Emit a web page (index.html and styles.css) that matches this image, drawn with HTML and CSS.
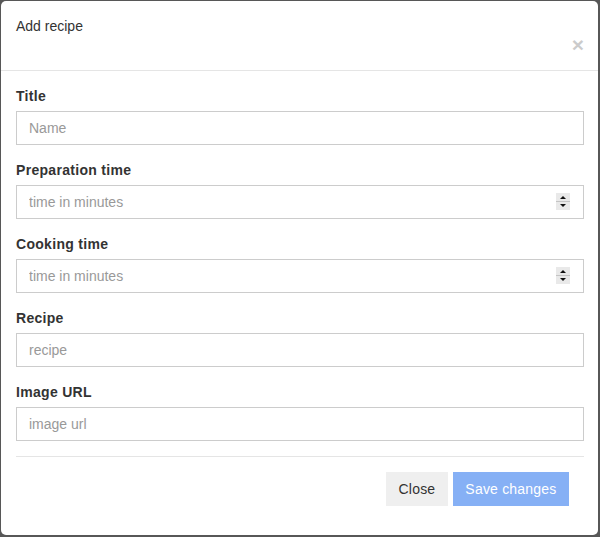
FILE: index.html
```html
<!DOCTYPE html>
<html>
<head>
<meta charset="utf-8">
<link rel="stylesheet" href="styles.css">
</head>
<body>
<div class="modal">
  <div class="modal-header">
    <h4 class="modal-title">Add recipe</h4>
    <span class="close">&times;</span>
  </div>
  <div class="modal-body">
    <div class="form-group">
      <label class="label">Title</label>
      <div class="field"><input class="input" type="text" placeholder="Name"></div>
    </div>
    <div class="form-group">
      <label class="label">Preparation time</label>
      <div class="field">
        <input class="input" type="text" placeholder="time in minutes">
        <span class="spinner"><span class="spin-up"></span><span class="spin-down"></span></span>
      </div>
    </div>
    <div class="form-group">
      <label class="label">Cooking time</label>
      <div class="field">
        <input class="input" type="text" placeholder="time in minutes">
        <span class="spinner"><span class="spin-up"></span><span class="spin-down"></span></span>
      </div>
    </div>
    <div class="form-group">
      <label class="label">Recipe</label>
      <div class="field"><input class="input" type="text" placeholder="recipe"></div>
    </div>
    <div class="form-group">
      <label class="label">Image URL</label>
      <div class="field"><input class="input" type="text" placeholder="image url"></div>
    </div>
    <hr class="divider">
  </div>
  <div class="modal-footer">
    <button class="btn btn-default">Close</button>
    <button class="btn btn-primary">Save changes</button>
  </div>
</div>
</body>
</html>
```
FILE: styles.css
```css
* { box-sizing: border-box; }
html, body { margin: 0; padding: 0; }
body {
  width: 600px;
  height: 537px;
  background: #575757;
  padding: 1px 2px 2px 1px;
  font-family: "Liberation Sans", Arial, sans-serif;
  font-size: 14px;
  line-height: 20px;
  color: #333;
}
.modal {
  background: #fff;
  height: 534px;
  border-radius: 5px;
}
.modal-header {
  padding: 15px 14px 15px 15px;
  border-bottom: 1px solid #e5e5e5;
}
.modal-header::after { content: ""; display: block; clear: both; }
.modal-title {
  margin: 0;
  font-size: 14px;
  font-weight: normal;
  line-height: 20px;
  color: #333;
}
.close {
  float: right;
  margin-top: -2px;
  font-size: 21px;
  font-weight: bold;
  line-height: 1;
  color: #000;
  opacity: 0.2;
}
.modal-body {
  padding: 15px 14px 0 15px;
}
.form-group {
  margin-bottom: 15px;
}
.label {
  display: block;
  font-weight: bold;
  letter-spacing: 0.3px;
  margin-bottom: 5px;
  color: #333;
}
.field {
  position: relative;
}
.input {
  display: block;
  width: 100%;
  height: 34px;
  padding: 6px 12px;
  border: 1px solid #ccc;
  border-radius: 0;
  font-family: "Liberation Sans", Arial, sans-serif;
  font-size: 14px;
  color: #555;
  background: #fff;
  outline: none;
}
.input::placeholder { color: #999; }
.spinner {
  position: absolute;
  right: 14px;
  top: 8px;
  width: 14px;
  height: 17px;
  background: #e9e9e9;
  display: flex;
  flex-direction: column;
}
.spin-up, .spin-down {
  flex: 1;
  position: relative;
}
.spin-up { border-bottom: 1px solid #c4c4c4; }
.spin-up::after, .spin-down::after {
  content: "";
  position: absolute;
  left: 4px;
  border-left: 3px solid transparent;
  border-right: 3px solid transparent;
}
.spin-up::after {
  top: 3px;
  border-bottom: 3px solid #111;
}
.spin-down::after {
  top: 2px;
  border-top: 3px solid #111;
}
.divider {
  margin: 0;
  border: 0;
  border-top: 1px solid #e5e5e5;
}
.modal-footer {
  padding: 15px 29px 15px 15px;
  display: flex;
  justify-content: flex-end;
  gap: 5px;
}
.btn {
  height: 34px;
  padding: 6px 12.5px;
  border: none;
  border-radius: 0;
  font-family: "Liberation Sans", Arial, sans-serif;
  font-size: 14px;
  letter-spacing: 0.2px;
  line-height: 20px;
}
.btn-default {
  background: #efefef;
  color: #333;
}
.btn-primary {
  background: #86b0f5;
  color: #fff;
}
```
